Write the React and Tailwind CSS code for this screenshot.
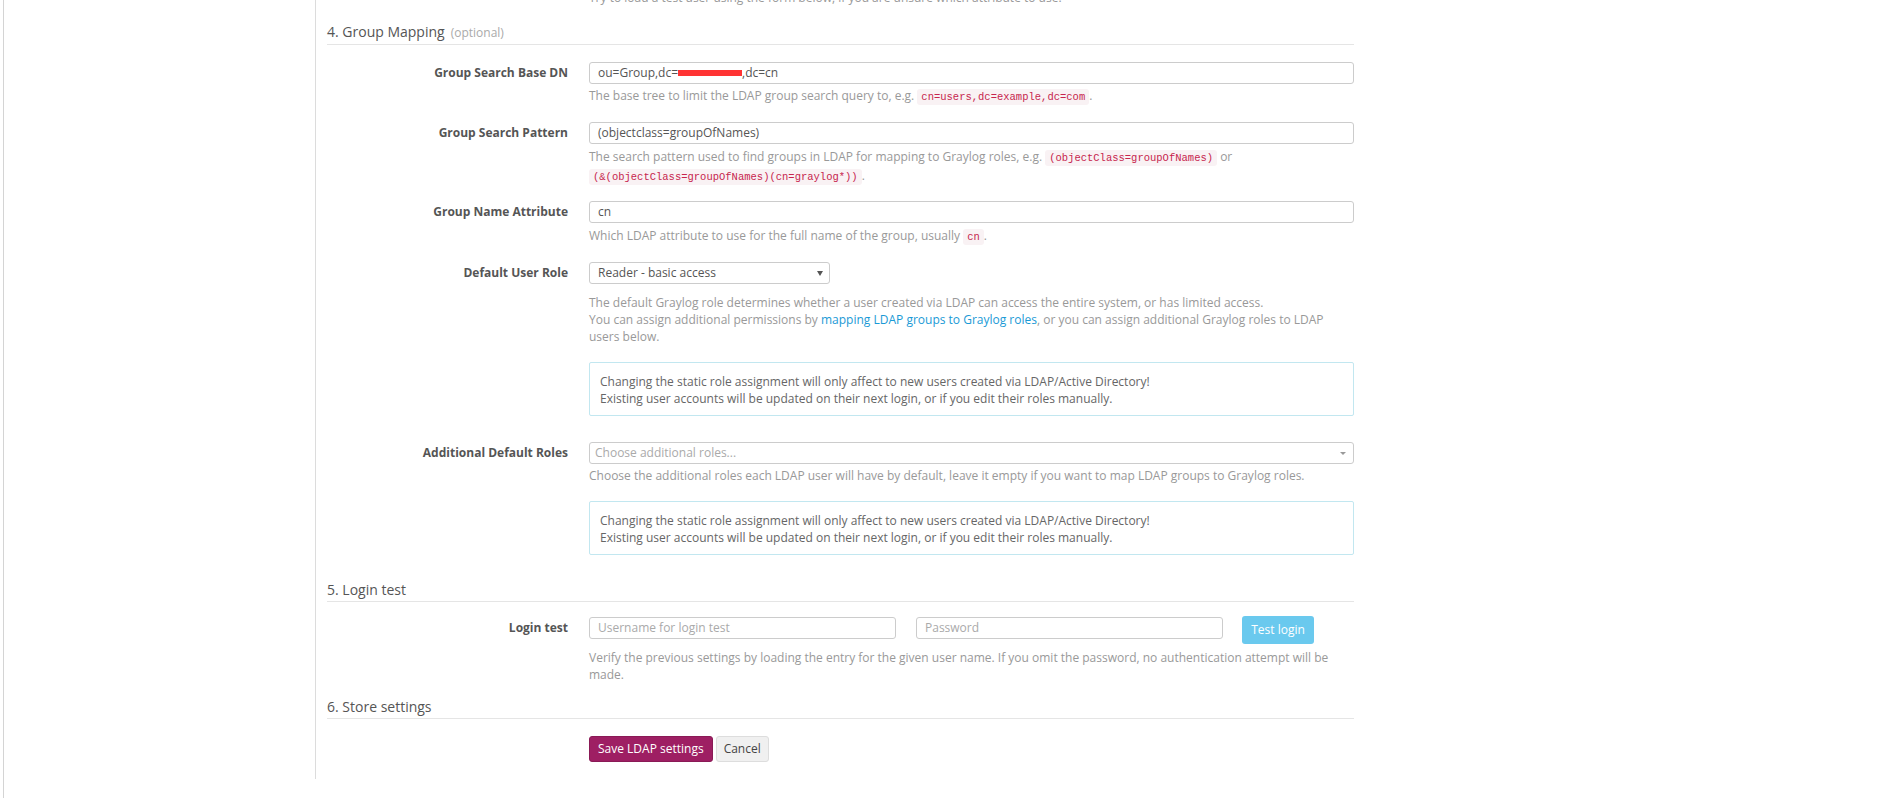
import React from "react";

const Code = ({ children }) => (
  <code className="rounded-[3px] bg-[#f9f2f4] px-[4px] py-[2px] font-['Liberation_Mono',monospace] text-[10.5px] leading-none text-[#c7254e]">
    {children}
  </code>
);

const Label = ({ children }) => (
  <div className="w-[241px] shrink-0 text-right font-bold leading-[22px] text-[#555]">{children}</div>
);

const Input = ({ value, placeholder, className = "" }) => (
  <div
    className={`flex h-[22px] items-center rounded-[3px] border border-[#ccc] bg-white px-[8px] ${className}`}
  >
    {value ? (
      <span className="text-[#555]">{value}</span>
    ) : (
      <span className="text-[#aaa]">{placeholder}</span>
    )}
  </div>
);

const Help = ({ children, className = "" }) => (
  <p className={`leading-[17px] text-[#999] ${className}`}>{children}</p>
);

const Heading = ({ children, extra, className = "" }) => (
  <div className={`border-b border-[#e5e5e5] pb-[1px] text-[14px] leading-[20px] text-[#555] ${className}`}>
    {children}
    {extra && <span className="ml-[6px] text-[12px] text-[#aaa]">{extra}</span>}
  </div>
);

const Notice = ({ className = "" }) => (
  <div className={`rounded-[2px] border border-[#c2e7f0] bg-white px-[10px] pt-[10px] pb-[8px] leading-[17px] text-[#666] ${className}`}>
    Changing the static role assignment will only affect to new users created via LDAP/Active Directory!
    <br />
    Existing user accounts will be updated on their next login, or if you edit their roles manually.
  </div>
);

export default function App() {
  return (
    <div className="flex h-[798px] w-[1880px] overflow-hidden bg-white font-['Open_Sans',sans-serif] text-[12px]">
      <div className="ml-[3px] h-full w-px bg-[#d4d4d4]" />
      <div className="ml-[311px] h-[779px] w-[1039px] border-l border-[#dcdcdc] pl-[11px]">
        <Help className="-mt-[11px] ml-[262px]">
          Try to load a test user using the form below, if you are unsure which attribute to use.
        </Help>

        <Heading className="mt-[16px]" extra="(optional)">
          4. Group Mapping
        </Heading>

        {/* Group Search Base DN */}
        <div className="mt-[17px] flex">
          <Label>Group Search Base DN</Label>
          <div className="ml-[21px] w-[765px]">
            <div className="flex h-[22px] items-center rounded-[3px] border border-[#ccc] bg-white px-[8px] text-[#555]">
              ou=Group,dc=
              <span className="inline-block h-[6px] w-[64px] bg-[#ff3333]" />
              ,dc=cn
            </div>
            <Help className="mt-[3px]">
              The base tree to limit the LDAP group search query to, e.g. <Code>cn=users,dc=example,dc=com</Code>.
            </Help>
          </div>
        </div>

        {/* Group Search Pattern */}
        <div className="mt-[18px] flex">
          <Label>Group Search Pattern</Label>
          <div className="ml-[21px] w-[765px]">
            <Input value="(objectclass=groupOfNames)" />
            <p className="mt-[3px] leading-[19px] text-[#999]">
              The search pattern used to find groups in LDAP for mapping to Graylog roles, e.g.{" "}
              <Code>(objectClass=groupOfNames)</Code> or
              <br />
              <Code>(&amp;(objectClass=groupOfNames)(cn=graylog*))</Code>.
            </p>
          </div>
        </div>

        {/* Group Name Attribute */}
        <div className="mt-[16px] flex">
          <Label>Group Name Attribute</Label>
          <div className="ml-[21px] w-[765px]">
            <Input value="cn" />
            <p className="mt-[3px] leading-[19px] text-[#999]">
              Which LDAP attribute to use for the full name of the group, usually <Code>cn</Code>.
            </p>
          </div>
        </div>

        {/* Default User Role */}
        <div className="mt-[17px] flex">
          <Label>Default User Role</Label>
          <div className="ml-[21px] w-[765px]">
            <div className="relative flex h-[22px] w-[241px] items-center rounded-[3px] border border-[#ccc] bg-white px-[8px] text-[#555]">
              Reader - basic access
              <span className="absolute right-[6px] top-[8px] h-0 w-0 border-x-[3px] border-t-[5px] border-x-transparent border-t-[#555]" />
            </div>
            <Help className="mt-[10px]">
              The default Graylog role determines whether a user created via LDAP can access the entire system, or has limited access.
              <br />
              You can assign additional permissions by{" "}
              <a className="text-[#1a9ad6]">mapping LDAP groups to Graylog roles</a>, or you can assign additional Graylog roles to LDAP
              <br />
              users below.
            </Help>
            <Notice className="mt-[17px]" />
          </div>
        </div>

        {/* Additional Default Roles */}
        <div className="mt-[26px] flex">
          <Label>Additional Default Roles</Label>
          <div className="ml-[21px] w-[765px]">
            <div className="relative flex h-[22px] items-center rounded-[3px] border border-[#ccc] bg-white px-[5px] text-[#aaa]">
              Choose additional roles...
              <span className="absolute right-[7px] top-[9px] h-0 w-0 border-x-[3px] border-t-[3px] border-x-transparent border-t-[#999]" />
            </div>
            <Help className="mt-[3px]">
              Choose the additional roles each LDAP user will have by default, leave it empty if you want to map LDAP groups to Graylog roles.
            </Help>
            <Notice className="mt-[17px]" />
          </div>
        </div>

        <Heading className="mt-[25px]">5. Login test</Heading>

        {/* Login test */}
        <div className="mt-[14px] flex">
          <div className="mt-[1px]">
            <Label>Login test</Label>
          </div>
          <div className="ml-[21px] w-[765px]">
            <div className="flex items-start">
              <Input placeholder="Username for login test" className="mt-[1px] w-[307px] px-[7px]" />
              <Input placeholder="Password" className="ml-[20px] mt-[1px] w-[307px] px-[7px]" />
              <button className="ml-[19px] h-[28px] w-[72px] rounded-[3px] bg-[#6ac9ee] text-[12px] text-white">
                Test login
              </button>
            </div>
            <Help className="mt-[5px]">
              Verify the previous settings by loading the entry for the given user name. If you omit the password, no authentication attempt will be
              <br />
              made.
            </Help>
          </div>
        </div>

        <Heading className="mt-[14px]">6. Store settings</Heading>

        <div className="mt-[17px] flex pl-[262px]">
          <button className="h-[26px] rounded-[3px] border border-[#8a1a56] bg-[#9e1f63] px-[8px] text-[12px] text-white">
            Save LDAP settings
          </button>
          <button className="ml-[3px] h-[26px] rounded-[3px] border border-[#ddd] bg-[#f0f0f0] px-[7px] text-[12px] text-[#444]">
            Cancel
          </button>
        </div>
      </div>
    </div>
  );
}
